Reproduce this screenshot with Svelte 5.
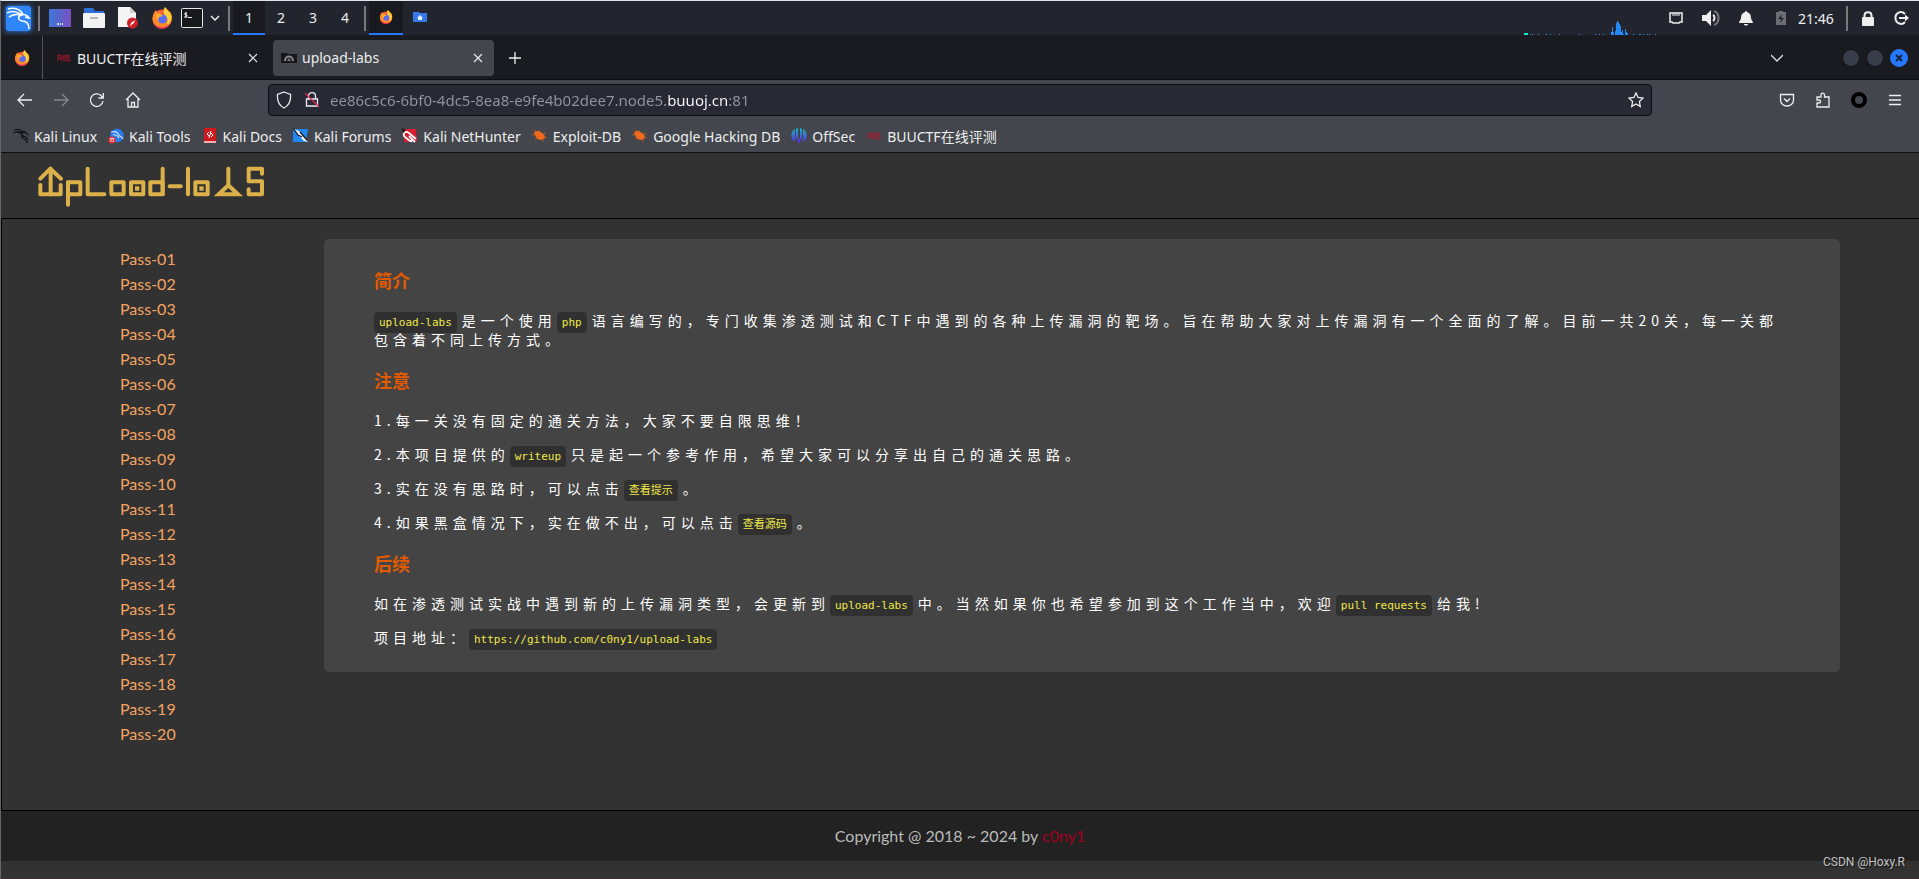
<script lang="ts">
    const workspaces = [1, 2, 3, 4];
    const passes = Array.from({length: 20}, (_, i) => 'Pass-' + String(i + 1).padStart(2, '0'));

    const bookmarks = [
        {icon: 'dragon', text: 'Kali Linux'},
        {icon: 'tools', text: 'Kali Tools'},
        {icon: 'docs', text: 'Kali Docs'},
        {icon: 'forums', text: 'Kali Forums'},
        {icon: 'nethunter', text: 'Kali NetHunter'},
        {icon: 'exploit', text: 'Exploit-DB'},
        {icon: 'exploit', text: 'Google Hacking DB'},
        {icon: 'offsec', text: 'OffSec'},
        {icon: 'buu', text: 'BUUCTF在线评测'}
    ];

    // cpu graph in the panel: x, height
    const bars = [
        [18, 1], [20, 1], [26, 1], [34, 1], [38, 1], [47, 1], [67, 1], [83, 1], [87, 1], [91, 1],
        [99, 3], [100, 8], [101, 3], [103, 4], [104, 12], [105, 14], [106, 13], [107, 11], [108, 9],
        [109, 3], [110, 5], [111, 1], [113, 6], [114, 3], [115, 2],
        [121, 1], [127, 1], [128, 1], [131, 1], [135, 1], [137, 1], [143, 1]
    ];

    let url = $state('ee86c5c6-6bf0-4dc5-8ea8-e9fe4b02dee7.node5.buuoj.cn:81');
    let workspace = $state(1);
</script>

{#snippet firefox(size)}
  <svg width={size} height={size} viewBox="0 0 22 22">
    <circle cx="11" cy="12" r="9.5" fill="#ff5a36"/>
    <path d="M1.500 12C1.500 8 3 5 5 3l1 3 3-1 2 3-3 3 2 5 6-1 2-6-5-4 1-5 4 4c3 2 3.500 6 2.500 10-1.500 5-5 7-9 7-6 0-10-4-10-9z" fill="#ff8a2a"/>
    <path d="M14 0c1 3 6 5 6.500 11-1 5-3 6-5 7 2-4 1-8-1-9-2-2-3-5-.5-9z" fill="#ffd23c"/>
    <path d="M2 14c2 6 9 8 14 5 2-1 4-3 4.500-6-1 6-5 9-10 9-5-.2-8-4-8.500-8z" fill="#ee2b5b"/>
    <circle cx="11.500" cy="12" r="4.500" fill="#5b6df0"/>
    <path d="M5 7l4 0 3 2-4 1-1 3c-2-2-2-4-2-6z" fill="#ffb02e"/>
  </svg>
{/snippet}

{#snippet cross()}
  <svg width="10" height="10" viewBox="0 0 10 10"><path d="M1 1l8 8M9 1L1 9" stroke="#e8e8ea" stroke-width="1.200"/></svg>
{/snippet}

{#snippet icon(name)}
  <svg width="16" height="16" viewBox="0 0 16 16" fill="none">
    {#if name === 'dragon'}
      <path d="M1 2c4-1 8 0 10 3M0 5c4-2 8-1 10 0 2-1 4 0 5 2M3 4c3 0 5 1 6 3 1 2 5 1 6 5M9 7c-1 3 2 4 4 5 1 1 1 2 1 3M12 5l-1-2" stroke="#0c0d10" stroke-width="1.100"/>
    {:else if name === 'tools'}
      <circle cx="9" cy="7.500" r="6.800" fill="#2a7bee"/>
      <path d="M3 4c4-1 7 0 8 3 1 2 3 1 4 4M5 7c3-1 5 1 6 3" stroke="#cfe3ff" stroke-width="1.100"/>
      <circle cx="4" cy="12" r="3.600" fill="#e23333"/>
      <path d="M3 10.500v3.500M5.200 10.500v3.500M2 10.500h4" stroke="#ffd9d9" stroke-width=".9"/>
    {:else if name === 'docs'}
      <path d="M2 0h12v15H2z" fill="#d0191f"/>
      <path d="M2 13h12v2H2z" fill="#f1b0b0"/>
      <path d="M7 4L5 6l2 2M9 5l2 2-2 2M9 3L7 10" stroke="#fff"/>
    {:else if name === 'forums'}
      <path d="M0 1h15l-2 13H0z" fill="#2088f2"/>
      <path d="M1 1l5 2 4 5 5 6-4-1-5-5z" fill="#f4f6fa"/>
      <path d="M0 0l5 7 4 2M7 4l7 8" stroke="#17191f" stroke-width="1.200"/>
    {:else if name === 'nethunter'}
      <path d="M1 1h13l1 13H2z" fill="#d91c2e"/>
      <path d="M13 14L9 10M14 11L7 5C3 2 0 6 3 9l5 4c2 1 3-1 1-3L7 8" stroke="#f8f8f8" stroke-width="1.800"/>
      <path d="M0 0l4 2-3 3z" fill="#17191f"/>
    {:else if name === 'exploit'}
      <path d="M2 5c2-3 5-2 8 0l3 3-1 3-4 1C5 11 3 8 2 5z" fill="#f26b1d"/>
      <path d="M3 2l3 4M7 2l1 3M11 6l3-1M12 9l3 1M10 11l1 3M0 7l4-1M3 11l3-1" stroke="#d95a14" stroke-width=".8"/>
    {:else if name === 'offsec'}
      <defs><linearGradient id="os" x1="0" y1="0" x2="0" y2="1"><stop stop-color="#19b8c8"/><stop offset="1" stop-color="#5a26e0"/></linearGradient></defs>
      <path d="M4 1v13C-1 11-1 4 4 1zM7 0v10L5 13V1zM9 0v10l2 3V1zM12 1v13c5-3 5-10 0-13zM7 11h2v4H7z" fill="url(#os)"/>
    {:else}
      <path d="M2 11V5h3v6M2 8h3M7 5v6M9 5v6M7 6h2M11 5h2v3h-2zM11 8v3h3V9" stroke="#b3142f" stroke-width=".9"/>
    {/if}
  </svg>
{/snippet}

<div class="screen">
  <div class="panel">
    <button class="menu" aria-label="Applications">
      <svg width="25" height="25" viewBox="0 0 25 25" fill="none">
        <rect width="25" height="25" rx="2" fill="#2f86fb"/>
        <path d="M2 3c6-2 13 0 15 6M1 7c6-3 11-1 15 2M3 11c4-3 9-3 13-2 2-1 5 0 7 3l-4-1M16 9c-5 1-4 5 0 6 4 0 7 2 7 8" stroke="#fff" stroke-width="1.600"/>
      </svg>
    </button>
    <span class="sep"></span>
    <button class="launcher" aria-label="Show desktop">
      <svg width="22" height="18" viewBox="0 0 22 18">
        <defs><linearGradient id="dk"><stop stop-color="#3c78d8"/><stop offset="1" stop-color="#7a4fc0"/></linearGradient></defs>
        <rect width="22" height="18" fill="url(#dk)"/><path d="M8 15h2M11 15h1M13 15h1" stroke="#fff" stroke-width="1.500"/>
      </svg>
    </button>
    <button class="launcher" aria-label="Files">
      <svg width="22" height="20" viewBox="0 0 22 20">
        <path d="M1 0h9l2 3h9v5H1z" fill="#2f6fd8"/><rect y="5" width="22" height="15" rx="1" fill="#f2f2f2"/><path d="M7 10h8" stroke="#b5b5b5" stroke-width="2"/>
      </svg>
    </button>
    <button class="launcher" aria-label="Text editor">
      <svg width="20" height="22" viewBox="0 0 20 22">
        <path d="M0 0h12l6 6v14H0z" fill="#f5f5f5"/><path d="M12 0l6 6h-6z" fill="#cfcfcf"/>
        <circle cx="14.500" cy="16" r="5.500" fill="#d01f26"/><path d="M12 19l1-3 4-3-1 3z" fill="#fff"/>
      </svg>
    </button>
    <button class="launcher" aria-label="Firefox">{@render firefox(22)}</button>
    <button class="terminal" aria-label="Terminal">
      <svg width="22" height="20" viewBox="0 0 22 20" fill="none" stroke="#e8e8e8">
        <rect x=".5" y=".5" width="21" height="19" rx="1" fill="#17191d"/><path d="M6 5H4v2h2v2H3M5 4v6M7 9.500h4"/>
      </svg>
    </button>
    <button class="more" aria-label="More">
      <svg width="10" height="6" viewBox="0 0 10 6"><path d="M1 1l4 4 4-4" fill="none" stroke="#eee" stroke-width="1.500"/></svg>
    </button>
    <span class="sep"></span>
    {#each workspaces as n}
      <button class="workspace" class:active={workspace === n} onclick={() => workspace = n}>{n}</button>
    {/each}
    <span class="sep"></span>
    <button class="task active" aria-label="Firefox window">{@render firefox(14)}</button>
    <button class="task" aria-label="Home folder">
      <svg width="14" height="10" viewBox="0 0 14 10"><path d="M0 0h6l1 1h7v9H0z" fill="#3579e8"/><path d="M7 3l3 3H9v2H5V6H4z" fill="#e8f0ff"/></svg>
    </button>

    <svg class="graph" width="144" height="34" viewBox="0 0 144 34">
      <rect x="10" y="32" width="4" height="2" fill="#17e6d0"/>
      {#each bars as [x, h]}
        <rect x={x - 2} y={34 - h} width="1" height={h} fill="#2589f5"/>
      {/each}
    </svg>
    <button class="tray" aria-label="Network">
      <svg width="14" height="12" viewBox="0 0 14 12" fill="none" stroke="#eee" stroke-width="1.500"><path d="M1 1h12v9h-2l-1 1H4l-1-1H1z"/><path d="M4 1v3M6 1v3M8 1v3M10 1v3" stroke-width="1"/></svg>
    </button>
    <button class="tray" aria-label="Volume">
      <svg width="18" height="16" viewBox="0 0 18 16" fill="none"><path d="M0 5h4l5-5v16l-5-5H0z" fill="#eee"/><path d="M11 5c2 1 2 5 0 6" stroke="#eee" stroke-width="2"/><path d="M12 1c6 2 6 12 0 14" stroke="#777" stroke-width="2"/></svg>
    </button>
    <button class="tray" aria-label="Notifications">
      <svg width="14" height="15" viewBox="0 0 14 15" fill="#eee"><path d="M7 0c1 0 1 1 1 1 3 1 4 3 4 6 0 2 2 3 2 5H0c0-2 2-3 2-5 0-3 1-5 4-6 0 0 0-1 1-1zM5 13h4c0 2-4 2-4 0z"/></svg>
    </button>
    <button class="tray" aria-label="Battery">
      <svg width="10" height="14" viewBox="0 0 10 14"><path d="M3 0h4v1h3v13H0V1h3z" fill="#6c6e73"/><path d="M6 3L2 8h3l-1 4 4-5H5z" fill="#22242c"/></svg>
    </button>
    <time class="clock">21:46</time>
    <span class="sep"></span>
    <button class="launcher" aria-label="Lock">
      <svg width="14" height="15" viewBox="0 0 14 15"><path d="M3.500 7V4.500c0-4.500 7-4.500 7 0V7" fill="none" stroke="#eee" stroke-width="2"/><rect x="1" y="6" width="12" height="9" rx="1" fill="#eee"/></svg>
    </button>
    <button class="launcher" aria-label="Log out">
      <svg width="16" height="14" viewBox="0 0 16 14" fill="none" stroke="#eee" stroke-width="2"><path d="M11 3C7-1 1 2 1.500 7c0 5 6 8 9.500 4M5 7h7"/><path d="M11 3.500L15 7l-4 3.500z" fill="#eee" stroke="none"/></svg>
    </button>
  </div>

  <div class="tabs">
    <button class="view" aria-label="Firefox View">{@render firefox(16)}</button>
    <div class="tab">
      {@render icon('buu')}
      <span class="title">BUUCTF在线评测</span>
      <button aria-label="Close tab">{@render cross()}</button>
    </div>
    <div class="tab current">
      <svg width="16" height="16" viewBox="0 0 16 16"><path d="M0 3h6l2 1h8v9H0z" fill="#17181b"/><path d="M4 11c0-6 8-6 8 0" fill="none" stroke="#888" stroke-width="2"/><path d="M6 11l2-3 2 3z" fill="#777"/></svg>
      <span class="title">upload-labs</span>
      <button aria-label="Close tab">{@render cross()}</button>
    </div>
    <button class="new" aria-label="New tab">
      <svg width="12" height="12" viewBox="0 0 12 12"><path d="M6 0v12M0 6h12" stroke="#eee" stroke-width="1.300"/></svg>
    </button>
    <button class="list" aria-label="List all tabs">
      <svg width="12" height="8" viewBox="0 0 12 8"><path d="M0 1l6 6 6-6" fill="none" stroke="#ddd" stroke-width="1.300"/></svg>
    </button>
    <div class="window">
      <button aria-label="Minimize"></button>
      <button aria-label="Maximize"></button>
      <button class="close" aria-label="Close">
        <svg width="8" height="8" viewBox="0 0 8 8"><path d="M1 1l6 6M7 1L1 7" stroke="#16233c" stroke-width="2"/></svg>
      </button>
    </div>
  </div>

  <div class="toolbar">
    <div class="nav">
      <button aria-label="Back"><svg width="16" height="14" viewBox="0 0 16 14"><path d="M15 7H1M7 1L1 7l6 6"/></svg></button>
      <button class="off" aria-label="Forward"><svg width="16" height="14" viewBox="0 0 16 14"><path d="M1 7h14M9 1l6 6-6 6"/></svg></button>
      <button aria-label="Reload"><svg width="16" height="16" viewBox="0 0 16 16"><path d="M14 9A6.300 6.300 0 1 1 12 3.500L14 6M14.300 1v5H9.500"/></svg></button>
      <button aria-label="Home"><svg width="16" height="16" viewBox="0 0 16 16"><path d="M1 8l7-7 7 7M3 6.500V15h10V6.500M6.500 15v-4.500h3V15"/></svg></button>
    </div>
    <div class="url">
      <svg width="16" height="18" viewBox="0 0 16 18"><path d="M8 1l6.500 2.500C15 9 13 14.500 8 17 3 14.500 1 9 1.500 3.500z"/></svg>
      <svg width="16" height="18" viewBox="0 0 16 18"><path d="M4.500 8V5c0-4.500 7-4.500 7 0v3M2.500 8h11v7h-11z"/><path d="M1 2l14 14" stroke="#e22850"/></svg>
      <input aria-label="Address" bind:value={url}>
      <button aria-label="Bookmark this page">
        <svg width="16" height="16" viewBox="0 0 16 16"><path d="M8 1l2.100 4.500 4.900.6-3.600 3.400.9 4.900L8 12l-4.300 2.400.9-4.900L1 6.100l4.900-.6z"/></svg>
      </button>
    </div>
    <div class="nav">
      <button aria-label="Pocket"><svg width="16" height="16" viewBox="0 0 16 16"><path d="M1.500 2.500h13V8a6.500 6.000 0 0 1-13 0zM5 6.500l3 3 3-3"/></svg></button>
      <button aria-label="Extensions"><svg width="16" height="16" viewBox="0 0 16 16"><path d="M2 15v-4h2c2 0 2-3 0-3H2V5h4V3c0-2.500 3.500-2.500 3.500 0v2H14v10z"/></svg></button>
      <button aria-label="Account"><svg width="16" height="16" viewBox="0 0 16 16"><circle class="ring" cx="8" cy="8" r="6"/></svg></button>
      <button aria-label="Menu"><svg width="14" height="12" viewBox="0 0 14 12"><path d="M1 1.500h12M1 6h12M1 10.500h12"/></svg></button>
    </div>
  </div>

  <nav class="bookmarks">
    {#each bookmarks as item}
      <a href="#top">{@render icon(item.icon)}{item.text}</a>
    {/each}
  </nav>

  <header id="top">
    <svg class="logo" role="img" aria-label="upload-labs" width="230" height="42" viewBox="110 60 690 126">
      <polyline points="120,101 150,71 182,101"/>
      <line x1="151" y1="71" x2="151" y2="148"/>
      <polyline points="120,120 120,148 181,148 181,120"/>
      <rect x="203" y="112" width="37" height="36"/>
      <line x1="203" y1="112" x2="203" y2="179"/>
      <polyline points="262,71 262,148 312,148"/>
      <rect x="333" y="112" width="37" height="36"/>
      <rect x="392" y="112" width="37" height="36"/>
      <rect class="dot" x="404" y="124" width="13" height="13"/>
      <rect x="450" y="112" width="37" height="36"/>
      <line x1="487" y1="71" x2="487" y2="148"/>
      <line x1="508" y1="124" x2="541" y2="124"/>
      <line x1="563" y1="71" x2="563" y2="148"/>
      <rect x="585" y="112" width="37" height="36"/>
      <rect class="dot" x="597" y="124" width="13" height="13"/>
      <line x1="684" y1="71" x2="684" y2="117"/>
      <polygon points="655,148 684,121 713,148"/>
      <polyline points="785,86 785,71 745,71 745,109 785,109 785,148 745,148 745,133"/>
    </svg>
  </header>

  <main>
    <ul class="passes">
      {#each passes as pass}
        <li><a href="#top">{pass}</a></li>
      {/each}
    </ul>
    <article>
      <h3>简介</h3>
      <p><code>upload-labs</code>是一个使用<code>php</code>语言编写的，专门收集渗透测试和CTF中遇到的各种上传漏洞的靶场。旨在帮助大家对上传漏洞有一个全面的了解。目前一共20关，每一关都包含着不同上传方式。</p>
      <h3>注意</h3>
      <p>1.每一关没有固定的通关方法，大家不要自限思维！</p>
      <p>2.本项目提供的<code>writeup</code>只是起一个参考作用，希望大家可以分享出自己的通关思路。</p>
      <p>3.实在没有思路时，可以点击<code>查看提示</code>。</p>
      <p>4.如果黑盒情况下，实在做不出，可以点击<code>查看源码</code>。</p>
      <h3>后续</h3>
      <p>如在渗透测试实战中遇到新的上传漏洞类型，会更新到<code>upload-labs</code>中。当然如果你也希望参加到这个工作当中，欢迎<code>pull requests</code>给我!</p>
      <p>项目地址：<code>https://github.com/c0ny1/upload-labs</code></p>
    </article>
  </main>

  <footer>Copyright @ 2018 ~ 2024 by&nbsp;<a href="#top">c0ny1</a></footer>
  <span class="mark">CSDN @Hoxy.R</span>
</div>

<style>
    :global(body) {
        margin: 0;
        background: #323232;
    }

    .screen {
        position: relative;
        box-sizing: border-box;
        min-height: 100vh;
        border-top: 1px solid #dfe7ea;
        border-left: 1px solid #666;
        border-bottom: 1px solid #3d2f33;
        background: #323232;
        font-family: "Noto Sans", "Noto Sans CJK SC", sans-serif;
        font-size: 14px;
        color: #eeeeee;
    }

    svg {
        display: block;
        flex: none;
    }

    button {
        display: flex;
        align-items: center;
        justify-content: center;
        padding: 0;
        border: 0;
        background: none;
        color: inherit;
        font: inherit;
    }

    a {
        color: inherit;
        text-decoration: none;
    }

    /* desktop panel */
    .panel {
        display: flex;
        align-items: center;
        height: 34px;
        border-bottom: 1px solid #1c1d22;
        background: #23252e;
    }

    .menu {
        width: 34px;
        padding-left: 1px;
    }

    .menu svg {
        border-radius: 2px;
        box-shadow: 0 0 5px #2f86fb;
    }

    .sep {
        width: 2px;
        height: 25px;
        margin: 0 3px;
        background: #77797d;
    }

    .launcher {
        width: 34px;
    }

    .terminal {
        width: 26px;
    }

    .more {
        width: 20px;
    }

    .workspace, .task {
        box-sizing: border-box;
        height: 34px;
        border-bottom: 2px solid transparent;
    }

    .workspace {
        width: 32px;
    }

    .task {
        width: 34px;
    }

    .active {
        border-color: #2777ff;
        background: #191a20;
    }

    .graph {
        margin-left: auto;
    }

    .tray {
        width: 35px;
    }

    .clock {
        width: 45px;
    }

    /* tab strip */
    .tabs {
        display: flex;
        align-items: center;
        height: 43px;
        border-bottom: 1px solid #0d0e11;
        background: #1a1b20;
    }

    .view {
        width: 42px;
        height: 43px;
        border-right: 1px solid #55565b;
    }

    .tab {
        box-sizing: border-box;
        display: flex;
        align-items: center;
        gap: 5px;
        width: 221px;
        height: 36px;
        margin-left: 4px;
        padding: 0 8px;
        border-radius: 4px;
    }

    .tab:not(.current) {
        margin-left: 5px;
    }

    .tab .title {
        flex: 1;
    }

    .tab button {
        width: 16px;
        height: 16px;
    }

    .current {
        background: #43464d;
    }

    .new {
        width: 42px;
    }

    .list {
        width: 36px;
        margin-left: auto;
        margin-right: 47px;
    }

    .window {
        display: flex;
        gap: 6px;
        margin-right: 11px;
    }

    .window button {
        box-sizing: border-box;
        width: 18px;
        height: 18px;
        border: 1px solid #101116;
        border-radius: 50%;
        background: #383d4a;
    }

    .window .close {
        border-color: #2777ff;
        background: #2777ff;
    }

    /* navigation */
    .toolbar {
        display: flex;
        align-items: center;
        justify-content: space-between;
        padding: 4px 6px;
        background: #43464d;
    }

    .toolbar svg {
        fill: none;
        stroke: #eeeeee;
        stroke-width: 1.3;
    }

    .nav {
        display: flex;
    }

    .nav button {
        width: 36px;
        height: 32px;
    }

    .nav .off {
        opacity: 0.4;
    }

    .nav .ring {
        stroke: #000;
        stroke-width: 4;
    }

    .url {
        box-sizing: border-box;
        display: flex;
        align-items: center;
        flex: 1;
        gap: 12px;
        height: 32px;
        margin: 0 117px;
        padding: 0 7px;
        border: 1px solid #0c0d10;
        border-radius: 4px;
        background: #272935;
    }

    /* the host part of the address is brighter than the rest */
    .url input {
        flex: 1;
        min-width: 0;
        height: 28px;
        margin-left: -2px;
        padding: 0;
        border: 0;
        outline: 0;
        background: linear-gradient(90deg, #94959b 338px, #fbfbfe 338px 397px, #94959b 397px);
        background-clip: text;
        -webkit-text-fill-color: transparent;
        color: #94959b;
        font: inherit;
        font-size: 15px;
    }

    .bookmarks {
        display: flex;
        align-items: center;
        gap: 11px;
        height: 32px;
        padding-left: 12px;
        border-bottom: 1px solid #0d0e11;
        background: #43464d;
        white-space: nowrap;
    }

    .bookmarks a {
        display: flex;
        align-items: center;
        gap: 5px;
    }

    /* the site */
    header {
        padding: 12px 36px 11px;
        border-bottom: 1px solid #000;
    }

    .logo {
        fill: none;
        stroke: #dcb14a;
        stroke-width: 12;
        stroke-linecap: round;
        stroke-linejoin: round;
    }

    .logo .dot {
        fill: #dcb14a;
        stroke: none;
    }

    .logo polygon {
        stroke-linejoin: miter;
    }

    main {
        display: flex;
        align-items: flex-start;
        padding: 20px 79px 64px 118px;
        border-left: 1px solid #000;
        border-bottom: 1px solid #000;
    }

    .passes {
        width: 204px;
        flex: none;
        margin: 0;
        padding: 7px 0 0;
        list-style: none;
        font: 16px/25px Lato, sans-serif;
        color: #f4a460;
    }

    article {
        display: flow-root;
        flex: 1;
        padding: 10px 50px;
        border-radius: 5px;
        background: #444444;
        font-family: "Noto Sans CJK SC", sans-serif;
    }

    h3 {
        margin: 18px 0;
        font-size: 18px;
        line-height: 26px;
        font-weight: bold;
        color: #e35b00;
    }

    p {
        margin: 15px 0;
        font-size: 14px;
        line-height: 19px;
        letter-spacing: 5px;
        color: #ffffff;
    }

    code {
        margin-right: 5px;
        padding: 4px 5px;
        border-radius: 4px;
        background: #303030;
        color: #f0e848;
        font-family: "DejaVu Sans Mono", "Noto Sans CJK SC", monospace;
        font-size: 11px;
        line-height: 11px;
        letter-spacing: normal;
    }

    footer {
        display: flex;
        justify-content: center;
        padding: 12px 0 13px;
        background: #222222;
        font: 16px/25px Lato, sans-serif;
        color: #bbbbbb;
    }

    footer a {
        color: #a0001e;
    }

    .mark {
        position: absolute;
        right: 14px;
        bottom: 8px;
        font: 12px/16px Roboto, sans-serif;
        color: #c4c4c4;
        text-shadow: 1px 1px 1px #111;
    }
</style>
